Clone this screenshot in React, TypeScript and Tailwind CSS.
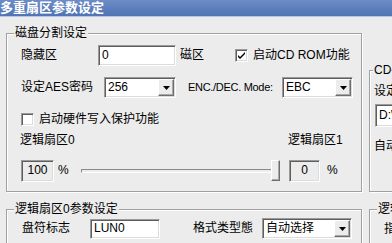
import type { ReactNode } from "react";

const sunken =
  "border border-t-[#9a9a9a] border-l-[#9a9a9a] border-r-white border-b-white shadow-[inset_1px_1px_0_#5e5e5e,inset_-1px_-1px_0_#dcdcdc]";
const raised =
  "border border-t-white border-l-white border-r-[#6e6e6e] border-b-[#6e6e6e] shadow-[inset_-1px_-1px_0_#a8a8a8]";

function Group({
  title,
  className,
  legendClass = "ml-[7px]",
  children,
}: {
  title: string;
  className: string;
  legendClass?: string;
  children: ReactNode;
}) {
  return (
    <fieldset
      className={`shrink-0 border border-[#a0a0a0] shadow-[inset_1px_1px_0_#fff,1px_1px_0_#fff] ${className}`}
    >
      <legend className={`bg-[#ececec] px-[1px] leading-[14px] ${legendClass}`}>{title}</legend>
      {children}
    </fieldset>
  );
}

function Input({ value, className }: { value: string; className: string }) {
  return (
    <div className={`flex items-center bg-white pl-[3px] ${sunken} ${className}`}>{value}</div>
  );
}

function Select({ value, className }: { value: string; className: string }) {
  return (
    <div className={`flex h-[21px] shrink-0 bg-white p-[1px] ${sunken} ${className}`}>
      <span className="flex flex-1 items-center pl-[2px]">{value}</span>
      <span className={`flex w-[16px] items-center justify-center bg-[#ececec] ${raised}`}>
        <svg width="7" height="4" viewBox="0 0 7 4">
          <path d="M0 0h7L3.5 4z" fill="#000" />
        </svg>
      </span>
    </div>
  );
}

function Check({ checked }: { checked?: boolean }) {
  return (
    <span className={`flex h-[13px] w-[13px] shrink-0 items-center justify-center bg-white ${sunken}`}>
      {checked && (
        <svg width="7" height="7" viewBox="0 0 7 7">
          <path d="M0 3l2 2 5-5v2L2 7 0 5z" fill="#000" />
        </svg>
      )}
    </span>
  );
}

export default function App() {
  return (
    <div className="h-[243px] w-[392px] overflow-hidden whitespace-nowrap bg-[#ececec] font-['Liberation_Sans','Noto_Sans_CJK_SC',sans-serif] text-[12px] leading-[15px] text-black">
      {/* Title bar */}
      <div className="h-[17px] border-b border-[#b4c6e4] bg-gradient-to-b from-[#6d8cc6] to-[#4f73b4] text-[13px] font-bold leading-[16px] text-white">
        多重扇区参数设定
      </div>

      <div className="flex pt-[9px]">
        {/* Left column */}
        <div className="ml-[6px] w-[356px] shrink-0">
          <Group title="磁盘分割设定" className="h-[166px] w-[356px]">
            <div className="mt-[5px] flex h-[21px] items-center pl-[14px]">
              <span className="w-[77px] shrink-0">隐藏区</span>
              <Input value="0" className="h-[21px] w-[78px] shrink-0" />
              <span className="ml-[4px] w-[55px] shrink-0">磁区</span>
              <Check checked />
              <span className="ml-[5px]">启动CD ROM功能</span>
            </div>
            <div className="mt-[11px] flex h-[21px] items-center pl-[14px]">
              <span className="w-[83px] shrink-0">设定AES密码</span>
              <Select value="256" className="w-[72px]" />
              <span className="ml-[12px] w-[94px] shrink-0 text-[11px] tracking-[-0.3px]">ENC./DEC. Mode:</span>
              <Select value="EBC" className="w-[71px]" />
            </div>
            <div className="mt-[15px] flex h-[13px] items-center pl-[14px]">
              <Check />
              <span className="ml-[5px]">启动硬件写入保护功能</span>
            </div>
            <div className="mt-[7px] flex h-[15px] items-center pl-[13px]">
              <span className="w-[268px] shrink-0">逻辑扇区0</span>
              <span>逻辑扇区1</span>
            </div>
            <div className="mt-[11px] flex h-[23px] items-center pl-[14px]">
              <div className={`flex h-[22px] w-[33px] shrink-0 items-center justify-center bg-[#ececec] ${sunken}`}>100</div>
              <span className="ml-[4px] w-[23px] shrink-0">%</span>
              <div className="flex w-[199px] shrink-0 items-center">
                <div className="h-[4px] flex-1 border-t border-l border-[#8a8a8a] border-b border-b-white" />
                <div className={`h-[21px] w-[9px] bg-[#ececec] ${raised}`} />
              </div>
              <div className={`ml-[9px] flex h-[22px] w-[31px] shrink-0 items-center justify-center bg-[#ececec] ${sunken}`}>0</div>
              <span className="ml-[7px]">%</span>
            </div>
          </Group>

          <Group title="逻辑扇区0参数设定" className="mt-[10px] h-[60px] w-[356px]">
            <div className="mt-[2px] flex h-[21px] items-center pl-[15px]">
              <span className="w-[68px] shrink-0">盘符标志</span>
              <Input value="LUN0" className="h-[20px] w-[70px] shrink-0" />
              <span className="ml-[33px] w-[69px] shrink-0">格式类型態</span>
              <Select value="自动选择" className="w-[90px]" />
            </div>
          </Group>
        </div>

        {/* Right column */}
        <div className="ml-[7px] w-[140px] shrink-0">
          <Group title="CD-ROM设定" legendClass="ml-[3px]" className="mt-[37px] h-[129px] w-[140px]">
            <div className="mt-[7px] pl-[4px]">设定ISO文件</div>
            <Input value="D:\ISO\cd.iso" className="ml-[5px] mt-[5px] h-[23px] w-[120px]" />
            <div className="mt-[12px] pl-[4px]">自动加载</div>
          </Group>
          <Group title="逻辑扇区1参数设定" className="mt-[10px] h-[60px] w-[140px]">
            <div className="mt-[6px] pl-[14px]">指定盘符</div>
          </Group>
        </div>
      </div>
    </div>
  );
}
